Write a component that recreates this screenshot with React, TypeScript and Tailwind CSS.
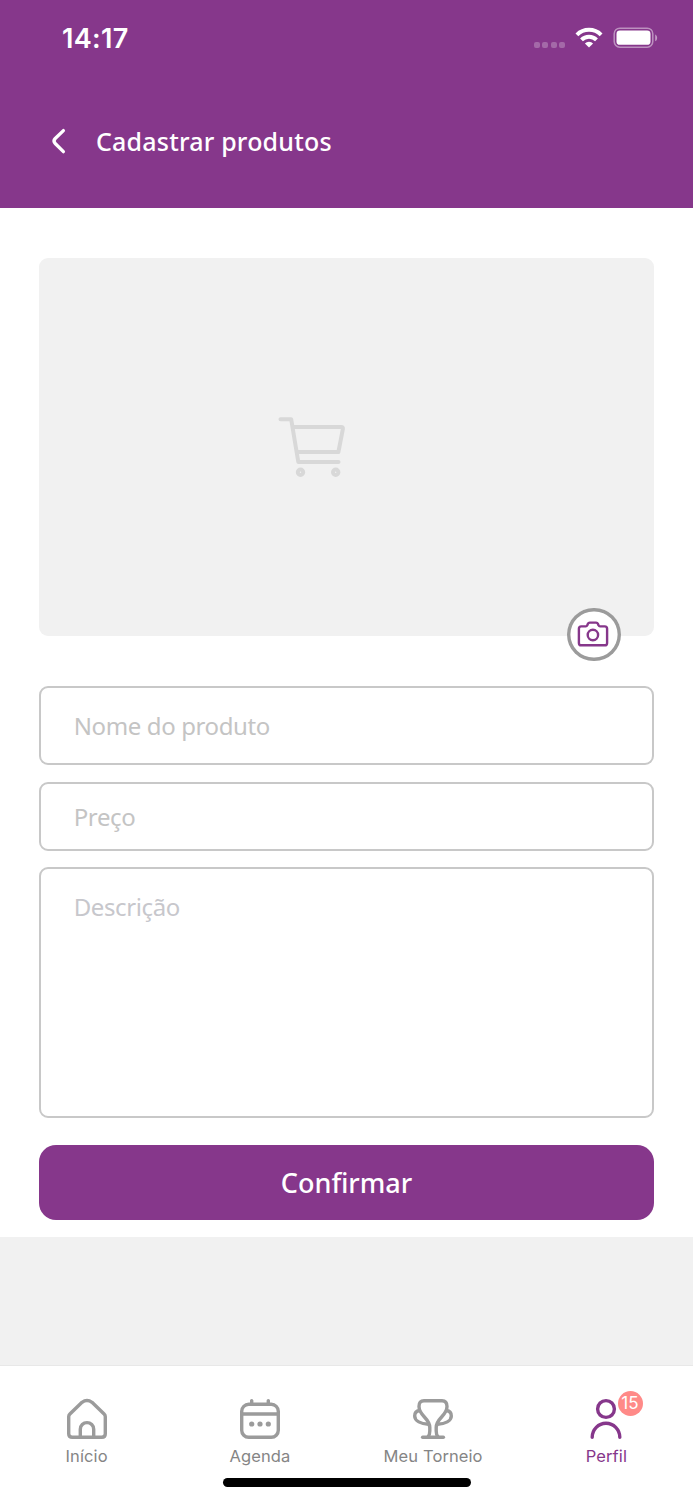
import type { ReactNode } from "react";

function StatusBar() {
  return (
    <div className="flex h-[76px] items-center justify-between pl-[62px] pr-[35px] font-['Inter',sans-serif]">
      <span className="text-[27px] font-semibold leading-none tracking-[0.3px]">14:17</span>
      <div className="flex items-center">
        <div className="mr-2.5 mt-[14px] flex gap-[2.4px]">
          <span className="size-[6px] rounded-[2px] bg-white/25" />
          <span className="size-[6px] rounded-[2px] bg-white/25" />
          <span className="size-[6px] rounded-[2px] bg-white/25" />
          <span className="size-[6px] rounded-[2px] bg-white/25" />
        </div>
        <svg className="mr-2.5" width="28" height="22" viewBox="0 0 28 22" fill="none" stroke="currentColor" strokeWidth="4">
          <path d="M1.9 7.8a17.2 17.2 0 0 1 24.2 0" />
          <path d="M6.5 12.8a10.6 10.6 0 0 1 15 0" />
          <path d="M9.9 16.5a5.8 5.8 0 0 1 8.2 0L14 20.6z" fill="currentColor" stroke="none" />
        </svg>
        <svg width="45" height="22" viewBox="0 0 45 22" fill="none">
          <rect x="1.2" y="1.2" width="38.6" height="19" rx="5.6" stroke="#fff" strokeOpacity=".45" strokeWidth="1.5" />
          <rect x="3.5" y="3.6" width="34" height="14.2" rx="3.4" fill="#fff" />
          <path d="M42.2 7.4c2.6 1.2 2.6 5.6 0 6.8z" fill="#fff" fillOpacity=".5" />
        </svg>
      </div>
    </div>
  );
}

function Header() {
  return (
    <header className="h-[207.6px] bg-[#86378b] text-white">
      <StatusBar />
      <div className="flex h-[131px] items-center pl-[50px]">
        <svg width="18" height="28" viewBox="0 0 18 28" fill="none" stroke="currentColor" strokeWidth="3.3" strokeLinecap="round" strokeLinejoin="round">
          <path d="M13.4 2.6 5.2 10.5q-2.4 2.5 0 5l8.2 8.2" />
        </svg>
        <h1 className="ml-7 text-[25px] font-medium leading-none tracking-[0.2px]">Cadastrar produtos</h1>
      </div>
    </header>
  );
}

function CartIcon() {
  return (
    <svg width="72" height="64" viewBox="0 0 72 64" fill="none" stroke="#d8d8d8" strokeWidth="4" strokeLinecap="round" strokeLinejoin="round">
      <path d="M4.5 4.3h10.7L22.3 47h40.2" />
      <path d="M17.5 11.9h47.6q2 0 1.8 2L62.4 37H21.5" />
      <circle cx="24.5" cy="57.3" r="2.7" />
      <circle cx="59.7" cy="57.3" r="2.7" />
    </svg>
  );
}

function CameraIcon() {
  return (
    <svg className="mb-0.5 mr-0.5" width="32" height="28" viewBox="0 0 32 28" fill="none" stroke="#86378b" strokeWidth="2.4" strokeLinejoin="round">
      <path d="M4.3 7.4h4.5q1 0 1.4-1l.7-1.6q.5-1.2 1.8-1.2h6.4q1.3 0 1.8 1.2l.7 1.6q.4 1 1.4 1h4.7q2.4 0 2.4 2.4v14.1q0 2.4-2.4 2.4H4.3q-2.4 0-2.4-2.4V9.8q0-2.4 2.4-2.4z" />
      <circle cx="15.9" cy="16" r="5.2" />
    </svg>
  );
}

function Field({ label, className }: { label: string; className: string }) {
  return (
    <div className={`flex rounded-[9px] border-2 border-[#c8c8c8] pl-[33px] text-[24px] leading-8 tracking-[-0.38px] ${className}`}>
      {label}
    </div>
  );
}

const HomeIcon = (
  <>
    <path d="M1.7 17.8q0-1.6 1.2-2.8L15 3.3q5-3.6 10 0L37.1 15q1.2 1.2 1.2 2.8v17q0 3.5-3.5 3.5H5.2q-3.5 0-3.5-3.5z" />
    <path d="M13.3 38V30.3a6.7 6.7 0 0 1 13.4 0V38" />
  </>
);

const CalendarIcon = (
  <>
    <rect x="1.7" y="5.3" width="36.6" height="33" rx="7" />
    <path d="M1.7 15h36.6M11.7 1.6V5M28.3 1.6V5" />
    <g fill="currentColor" stroke="none">
      <circle cx="11.7" cy="25" r="2.6" />
      <circle cx="20" cy="25" r="2.6" />
      <circle cx="28.3" cy="25" r="2.6" />
    </g>
  </>
);

const TrophyIcon = (
  <>
    <path d="M15 38Q16.8 36 16.8 32v-3.5C16.8 19 6 17 6 7.500q0-5.800 5-5.800h18q5 0 5 5.800C34 17 23.200 19 23.200 28.500V32q0 4 1.800 6" />
    <path d="M6.4 11.5C2.6 12 1.7 14.6 1.7 17c0 5 6.3 7.800 13.800 8.300M33.600 11.500c3.800.5 4.700 3.100 4.700 5.500 0 5-6.300 7.800-13.800 8.300" />
    <path d="M9.6 38.3h20.8" />
  </>
);

const PersonIcon = (
  <>
    <circle cx="20" cy="10" r="8.4" />
    <path d="M6.2 38.3a13.8 14 0 0 1 27.6 0" />
  </>
);

function Tab({ label, icon, active, badge }: { label: string; icon: ReactNode; active?: boolean; badge?: number }) {
  return (
    <div className={`flex flex-1 flex-col items-center ${active ? "text-[#86378b]" : "text-[#9b9b9b]"}`}>
      <div className="relative">
        <svg className="overflow-visible" width="40" height="40" viewBox="0 0 40 40" fill="none" stroke="currentColor" strokeWidth="3.4" strokeLinecap="round" strokeLinejoin="round">
          {icon}
        </svg>
        {badge && (
          <span className="absolute -top-[8.5px] left-[31.5px] flex size-[25px] items-center justify-center rounded-full bg-[#ff8a88] pr-px text-[17px] leading-none text-white">
            {badge}
          </span>
        )}
      </div>
      <span className={`mt-[7px] whitespace-nowrap text-[16.5px] leading-5 tracking-[0.1px] ${active ? "" : "text-[#858585]"}`}>
        {label}
      </span>
    </div>
  );
}

export default function App() {
  return (
    <div className="flex h-[1500px] w-[693px] flex-col bg-[#f1f1f1] font-['Noto_Sans',sans-serif]">
      <Header />
      <main className="flex h-[1029.4px] flex-col bg-white px-[38.7px] pt-[50px] text-[#c4c4c4]">
        <div className="relative h-[378px] shrink-0 rounded-[9px] bg-[#f1f1f1] pl-[237px] pt-[157px]">
          <CartIcon />
          <button className="absolute -bottom-[25.5px] right-[33.5px] flex size-[53.5px] items-center justify-center rounded-full bg-white shadow-[inset_0_0_0_3.4px_#9b9b9b]">
            <CameraIcon />
          </button>
        </div>
        <Field label="Nome do produto" className="mt-[50px] h-[79px] items-center pt-0.5" />
        <Field label="Preço" className="mt-[17px] h-[69px] items-center pt-0.5" />
        <Field label="Descrição" className="mt-[16.5px] h-[251px] items-start pt-[22px] text-[#c7c7cc]" />
        <button className="mt-[27px] h-[75px] shrink-0 rounded-[17px] bg-[#86378b] pt-0.5 text-[27px] font-medium text-white">
          Confirmar
        </button>
      </main>
      <nav className="mt-auto flex h-[134px] flex-col bg-white pt-[33px] font-['Inter',sans-serif] shadow-[0_-1px_0_#e8e8e8]">
        <div className="flex">
          <Tab label="Início" icon={HomeIcon} />
          <Tab label="Agenda" icon={CalendarIcon} />
          <Tab label="Meu Torneio" icon={TrophyIcon} />
          <Tab label="Perfil" icon={PersonIcon} active badge={15} />
        </div>
        <div className="mt-3 h-[8.6px] w-[248px] shrink-0 self-center rounded-full bg-black" />
      </nav>
    </div>
  );
}
